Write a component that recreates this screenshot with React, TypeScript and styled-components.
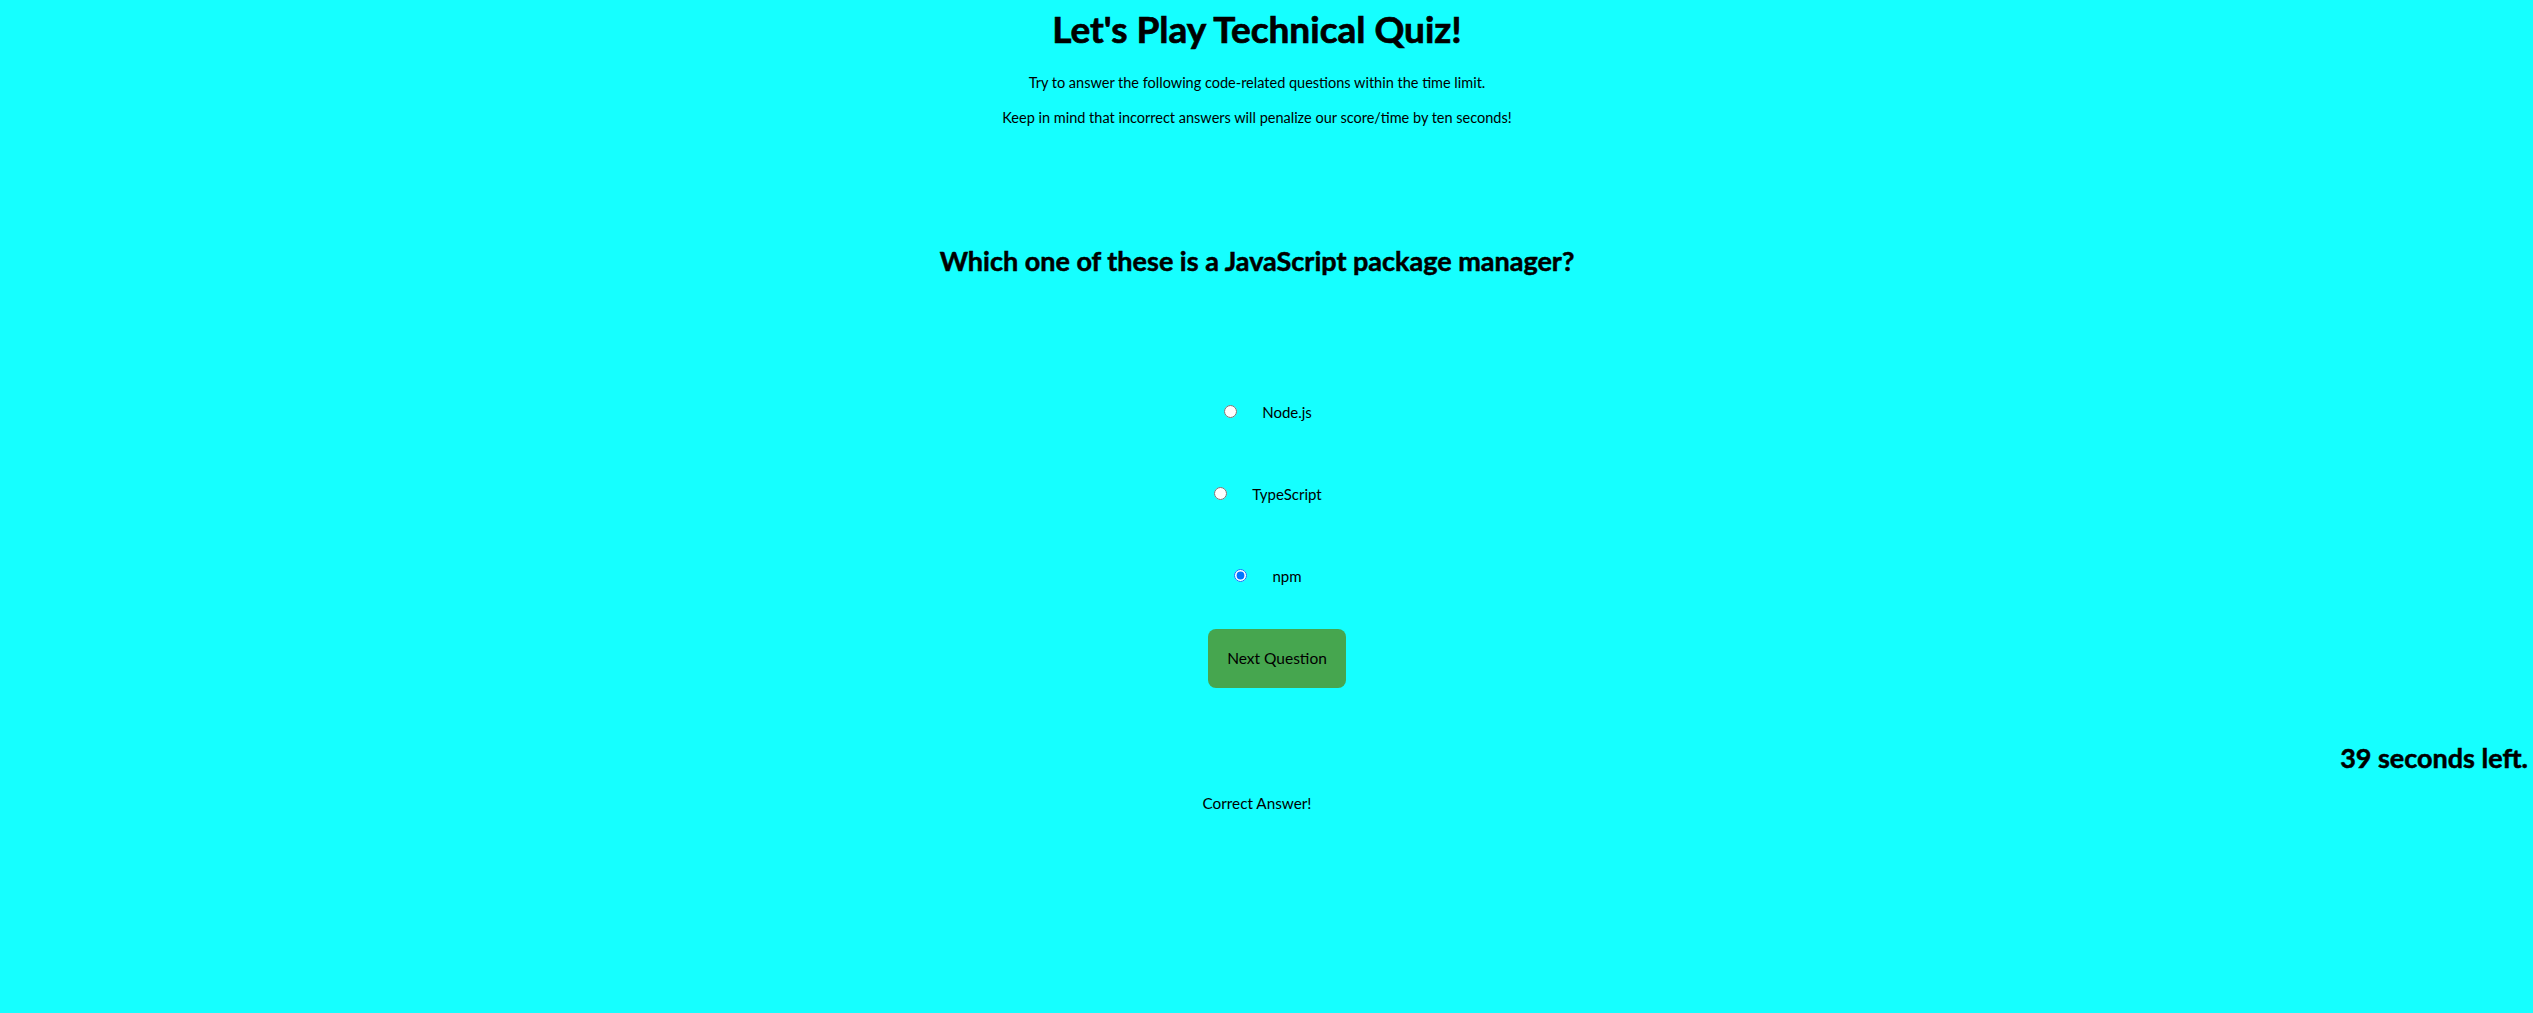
import { createGlobalStyle } from 'styled-components';
import styled from 'styled-components';

const GlobalStyle = createGlobalStyle`
  html, body {
    margin: 0;
    padding: 0;
    background: #15ffff;
    min-height: 100%;
  }
  body {
    font-family: Lato, 'Open Sans', sans-serif;
    color: #000;
  }
`;

const Page = styled.main`
  display: flex;
  flex-direction: column;
  align-items: center;
  min-height: 1013px;
  padding: 0 8px;
  box-sizing: border-box;
  line-height: 1.2;
`;

// bold headings are a touch heavier in the design than Lato Bold
const Title = styled.h1`
  margin: 6.5px 19px 0 0;
  font-size: 37px;
  font-weight: 700;
  line-height: 1.2;
  -webkit-text-stroke: 0.7px #000;
`;

const Intro = styled.p<{ $gap: number }>`
  margin: ${(p) => p.$gap}px 19px 0 0;
  font-size: 14.5px;
  line-height: 1.2;
`;

const Question = styled.h2`
  margin: 119px 19px 0 0;
  font-size: 27px;
  font-weight: 700;
  line-height: 1.2;
  -webkit-text-stroke: 0.5px #000;
`;

const Options = styled.div`
  display: flex;
  flex-direction: column;
  align-items: center;
  gap: 62px;
  margin: 124px 0 0 3px;
`;

const Option = styled.label`
  display: flex;
  align-items: center;
  gap: 25px;
  height: 20px;
  font-size: 15px;
  cursor: pointer;
`;

const Radio = styled.input`
  width: 13px;
  height: 13px;
  margin: 0;
`;

const NextButton = styled.button`
  margin: 43px 0 0 21px;
  width: 138px;
  height: 59px;
  border: none;
  border-radius: 8px;
  background: #46a64f;
  color: #000;
  font-family: Lato, 'Open Sans', sans-serif;
  font-size: 15.5px;
  cursor: pointer;
`;

const Timer = styled.h2`
  align-self: flex-end;
  margin: 54px -3px 0 0;
  font-size: 27px;
  font-weight: 700;
  line-height: 1.2;
  -webkit-text-stroke: 0.5px #000;
`;

const Feedback = styled.p`
  margin: 20px 19px 0 0;
  font-size: 15.3px;
  line-height: 1.2;
`;

const choices = ['Node.js', 'TypeScript', 'npm'];

export default function App() {
  return (
    <>
      <GlobalStyle />
      <Page>
        <Title>Let's Play Technical Quiz!</Title>
        <Intro $gap={23}>Try to answer the following code-related questions within the time limit.</Intro>
        <Intro $gap={17.5}>Keep in mind that incorrect answers will penalize our score/time by ten seconds!</Intro>
        <Question>Which one of these is a JavaScript package manager?</Question>
        <Options>
          {choices.map((c) => (
            <Option key={c}>
              <Radio type="radio" name="answer" defaultChecked={c === 'npm'} />
              {c}
            </Option>
          ))}
        </Options>
        <NextButton>Next Question</NextButton>
        <Timer>39 seconds left.</Timer>
        <Feedback>Correct Answer!</Feedback>
      </Page>
    </>
  );
}
